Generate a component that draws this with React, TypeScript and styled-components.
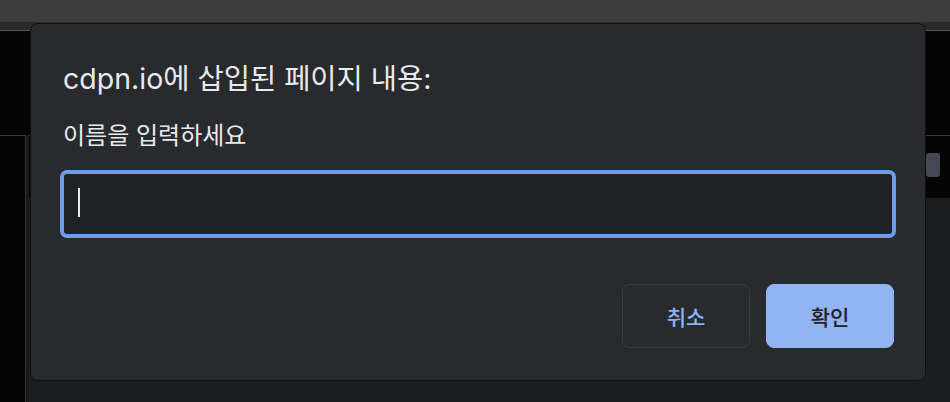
import React from "react";
import styled, { createGlobalStyle } from "styled-components";

const Global = createGlobalStyle`
  html, body { margin: 0; padding: 0; background: #050505; }
  body { width: 950px; height: 402px; overflow: hidden; font-family: Inter, "Noto Sans CJK KR", sans-serif; }
  * { box-sizing: border-box; }
`;

const Page = styled.div`
  position: relative;
  width: 950px;
  height: 402px;
  display: flex;
  flex-direction: column;
  background: #050505;
`;

const TopBar = styled.div`
  height: 22px;
  background: #3d3d3d;
  flex: none;
`;

const TabStrip = styled.div`
  height: 9px;
  background: #2a2a2a;
  border-bottom: 1px solid #555;
  flex: none;
`;

const Body = styled.div`
  flex: 1;
  display: grid;
  grid-template-columns: 26px 1fr;
`;

const Sidebar = styled.div`
  display: flex;
  flex-direction: column;
`;

const SideTop = styled.div`
  height: 104px;
  background: #050505;
`;

const SideRest = styled.div`
  flex: 1;
  background: #050505;
  border-top: 1px solid #3a3a3a;
  border-right: 1px solid #333;
`;

const Main = styled.div`
  display: flex;
  flex-direction: column;
  border-left: 3px solid #1a1a1a;
  margin-top: 104px;
`;

const MainTop = styled.div`
  height: 63px;
  background: #050505;
  border-top: 1px solid #3a3a3a;
  display: flex;
  justify-content: flex-end;
  align-items: flex-start;
  padding: 17px 10px 0 0;
`;

const SmallButton = styled.div`
  width: 14px;
  height: 24px;
  border-radius: 3px;
  background: #454755;
`;

const MainRest = styled.div`
  flex: 1;
  background: #1c1d21;
`;

const Dialog = styled.div`
  position: absolute;
  left: 30px;
  top: 23px;
  width: 896px;
  height: 358px;
  background: #292a2e;
  border: 1px solid #0e0f11;
  border-radius: 8px;
  padding: 37px 29px 32px 29px;
  display: flex;
  flex-direction: column;
`;

const Title = styled.h1`
  margin: 0;
  font-size: 28.5px;
  font-weight: 400;
  line-height: 36px;
  color: #e8eaed;
  padding-left: 3px;
  white-space: nowrap;
`;

const Message = styled.p`
  margin: 24px 0 0 0;
  font-size: 24px;
  font-weight: 400;
  line-height: 30px;
  color: #e8eaed;
  padding-left: 3px;
  white-space: nowrap;
`;

const Field = styled.div`
  margin-top: 19px;
  height: 68px;
  flex: none;
  border: 4px solid #6f9ce9;
  border-radius: 7px;
  background: #202124;
  display: flex;
  align-items: center;
  padding-left: 14px;
`;

const Caret = styled.span`
  width: 2px;
  height: 29px;
  margin-top: -3px;
  background: #e8eaed;
`;

const Actions = styled.div`
  margin-top: auto;
  display: flex;
  justify-content: flex-end;
  gap: 16px;
  padding-right: 2px;
`;

const Button = styled.button<{ $primary?: boolean }>`
  width: 128px;
  height: 64px;
  border-radius: 8px;
  font-family: Inter, "Noto Sans CJK KR", sans-serif;
  font-size: 21px;
  font-weight: 500;
  border: 1px solid ${(p) => (p.$primary ? "#93b4f3" : "#3c3d41")};
  background: ${(p) => (p.$primary ? "#93b4f3" : "transparent")};
  color: ${(p) => (p.$primary ? "#202124" : "#8ab4f8")};
  display: flex;
  align-items: center;
  justify-content: center;
  padding: 0;
`;

export default function App() {
  return (
    <>
      <Global />
      <Page>
        <TopBar />
        <TabStrip />
        <Body>
          <Sidebar>
            <SideTop />
            <SideRest />
          </Sidebar>
          <Main>
            <MainTop>
              <SmallButton />
            </MainTop>
            <MainRest />
          </Main>
        </Body>
        <Dialog>
          <Title>cdpn.io에 삽입된 페이지 내용:</Title>
          <Message>이름을 입력하세요</Message>
          <Field>
            <Caret />
          </Field>
          <Actions>
            <Button>취소</Button>
            <Button $primary>확인</Button>
          </Actions>
        </Dialog>
      </Page>
    </>
  );
}
